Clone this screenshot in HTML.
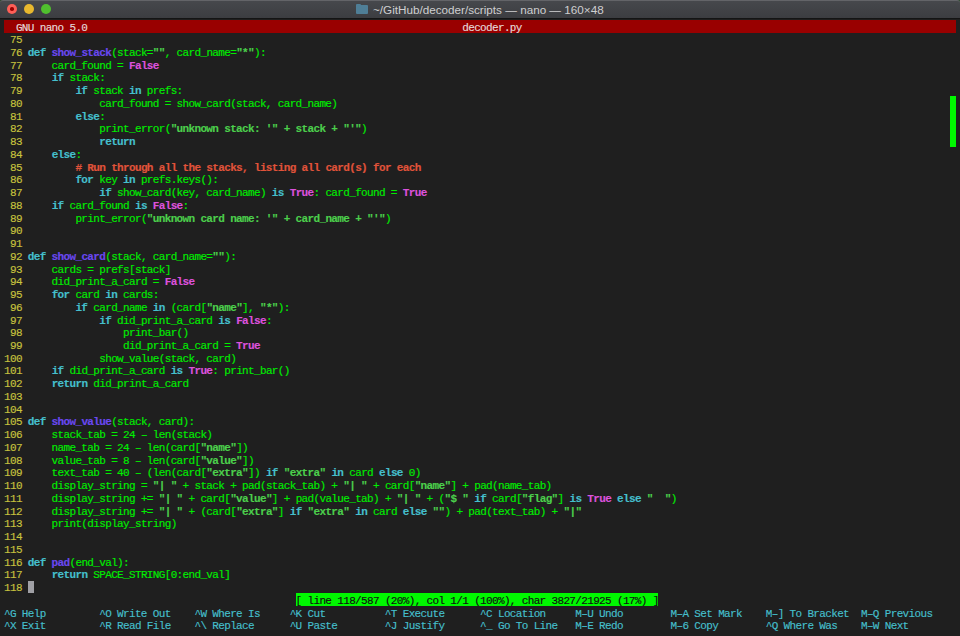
<!DOCTYPE html>
<html><head><meta charset="utf-8"><style>
html,body{margin:0;padding:0}
body{width:960px;height:636px;overflow:hidden;background:#1f1f1f;position:relative}
.bg0{position:absolute;left:0;top:0;width:960px;height:10px;background:#2f4a30}
.win{position:absolute;left:0;top:0;width:960px;height:18px;background:linear-gradient(#46484c,#3c3d41);border-top:1px solid #636468;box-sizing:border-box;border-radius:3px 3px 0 0}
.winb{position:absolute;left:0;top:18px;width:960px;height:1px;background:#141414}
.dot{position:absolute;top:3.9px;width:10.6px;height:10.6px;border-radius:50%}
.title{position:absolute;top:2.6px;left:373px;font:11.7px/14px "Liberation Sans",sans-serif;color:#cfcfd0;white-space:pre}
.folder{position:absolute;left:356px;top:5px;width:12px;height:9px;background:#4f7e96;border-radius:1px}
.folder:before{content:"";position:absolute;left:0;top:-1.5px;width:5px;height:2px;background:#4f7e96;border-radius:1px 1px 0 0}
.r{position:absolute;left:4px;height:12.74px;white-space:pre;font:11px/12.74px "Liberation Mono",monospace;letter-spacing:-0.65px;padding-top:1.5px;box-sizing:border-box;color:#00ee00;-webkit-text-stroke:0.15px}
.r b,.r i{font-style:normal;font-weight:normal}
.tb{position:absolute;left:4px;width:952px;height:12.9px;background:#990000}
.tt{color:#e6d8d8}
.ln{color:#c8c33e}
.kw{color:#45bfcc;font-weight:bold!important}
.fn{color:#6a48f0;font-weight:bold!important}
.sp{color:#dc52dc;font-weight:bold!important}
.st{color:#4ccf4c;font-weight:bold!important}
.cm{color:#e0533a;font-weight:bold!important}
.cur{position:absolute;left:28px;width:6px;height:12.74px;background:#a0a0a5}
.ind{position:absolute;left:949.7px;width:6.3px;background:#00f800}
.st0{position:absolute;left:295.55px;width:362.95px;height:12.74px;background:#00f800}
.stt{color:#101010}
.sc{color:#45bfcc}
</style></head><body>
<div class=bg0></div><div class=win></div><div class=winb></div>
<div class=dot style="left:6.7px;background:#fe5f57"><i style="position:absolute;left:3.5px;top:3.5px;width:3.6px;height:3.6px;border-radius:50%;background:#9a0000"></i></div>
<div class=dot style="left:23.6px;background:#e8b82e"></div>
<div class=dot style="left:40.6px;background:#50c02e"></div>
<div class=folder></div>
<div class=title>~/GitHub/decoder/scripts — nano — 160×48</div>
<div class=tb style="top:20.00px"></div>
<div class=r style="top:20.00px"><i class=tt>  GNU nano 5.0                                                               decoder.py</i></div>
<div class=r style="top:32.74px"><i class=ln> 75 </i></div>
<div class=r style="top:45.48px"><i class=ln> 76 </i><b class=kw>def</b><b class=fn> show_stack</b>(stack=<b class=st>&quot;&quot;</b>, card_name=<b class=st>&quot;*&quot;</b>):</div>
<div class=r style="top:58.22px"><i class=ln> 77 </i>    card_found = <b class=sp>False</b></div>
<div class=r style="top:70.96px"><i class=ln> 78 </i>    <b class=kw>if</b> stack:</div>
<div class=r style="top:83.70px"><i class=ln> 79 </i>        <b class=kw>if</b> stack <b class=kw>in</b> prefs:</div>
<div class=r style="top:96.44px"><i class=ln> 80 </i>            card_found = show_card(stack, card_name)</div>
<div class=r style="top:109.18px"><i class=ln> 81 </i>        <b class=kw>else</b>:</div>
<div class=r style="top:121.92px"><i class=ln> 82 </i>            print_error(<b class=st>&quot;unknown stack: &#x27;&quot; + stack + &quot;&#x27;&quot;</b>)</div>
<div class=r style="top:134.66px"><i class=ln> 83 </i>            <b class=kw>return</b></div>
<div class=r style="top:147.40px"><i class=ln> 84 </i>    <b class=kw>else</b>:</div>
<div class=r style="top:160.14px"><i class=ln> 85 </i>       <b class=cm> # Run through all the stacks, listing all card(s) for each</b></div>
<div class=r style="top:172.88px"><i class=ln> 86 </i>        <b class=kw>for</b> key <b class=kw>in</b> prefs.keys():</div>
<div class=r style="top:185.62px"><i class=ln> 87 </i>            <b class=kw>if</b> show_card(key, card_name) <b class=kw>is</b> <b class=sp>True</b>: card_found = <b class=sp>True</b></div>
<div class=r style="top:198.36px"><i class=ln> 88 </i>    <b class=kw>if</b> card_found <b class=kw>is</b> <b class=sp>False</b>:</div>
<div class=r style="top:211.10px"><i class=ln> 89 </i>        print_error(<b class=st>&quot;unknown card name: &#x27;&quot; + card_name + &quot;&#x27;&quot;</b>)</div>
<div class=r style="top:223.84px"><i class=ln> 90 </i></div>
<div class=r style="top:236.58px"><i class=ln> 91 </i></div>
<div class=r style="top:249.32px"><i class=ln> 92 </i><b class=kw>def</b><b class=fn> show_card</b>(stack, card_name=<b class=st>&quot;&quot;</b>):</div>
<div class=r style="top:262.06px"><i class=ln> 93 </i>    cards = prefs[stack]</div>
<div class=r style="top:274.80px"><i class=ln> 94 </i>    did_print_a_card = <b class=sp>False</b></div>
<div class=r style="top:287.54px"><i class=ln> 95 </i>    <b class=kw>for</b> card <b class=kw>in</b> cards:</div>
<div class=r style="top:300.28px"><i class=ln> 96 </i>        <b class=kw>if</b> card_name <b class=kw>in</b> (card[<b class=st>&quot;name&quot;</b>], <b class=st>&quot;*&quot;</b>):</div>
<div class=r style="top:313.02px"><i class=ln> 97 </i>            <b class=kw>if</b> did_print_a_card <b class=kw>is</b> <b class=sp>False</b>:</div>
<div class=r style="top:325.76px"><i class=ln> 98 </i>                print_bar()</div>
<div class=r style="top:338.50px"><i class=ln> 99 </i>                did_print_a_card = <b class=sp>True</b></div>
<div class=r style="top:351.24px"><i class=ln>100 </i>            show_value(stack, card)</div>
<div class=r style="top:363.98px"><i class=ln>101 </i>    <b class=kw>if</b> did_print_a_card <b class=kw>is</b> <b class=sp>True</b>: print_bar()</div>
<div class=r style="top:376.72px"><i class=ln>102 </i>    <b class=kw>return</b> did_print_a_card</div>
<div class=r style="top:389.46px"><i class=ln>103 </i></div>
<div class=r style="top:402.20px"><i class=ln>104 </i></div>
<div class=r style="top:414.94px"><i class=ln>105 </i><b class=kw>def</b><b class=fn> show_value</b>(stack, card):</div>
<div class=r style="top:427.68px"><i class=ln>106 </i>    stack_tab = 24 – len(stack)</div>
<div class=r style="top:440.42px"><i class=ln>107 </i>    name_tab = 24 – len(card[<b class=st>&quot;name&quot;</b>])</div>
<div class=r style="top:453.16px"><i class=ln>108 </i>    value_tab = 8 – len(card[<b class=st>&quot;value&quot;</b>])</div>
<div class=r style="top:465.90px"><i class=ln>109 </i>    text_tab = 40 – (len(card[<b class=st>&quot;extra&quot;</b>]) <b class=kw>if</b> <b class=st>&quot;extra&quot;</b> <b class=kw>in</b> card <b class=kw>else</b> 0)</div>
<div class=r style="top:478.64px"><i class=ln>110 </i>    display_string = <b class=st>&quot;| &quot;</b> + stack + pad(stack_tab) + <b class=st>&quot;| &quot;</b> + card[<b class=st>&quot;name&quot;</b>] + pad(name_tab)</div>
<div class=r style="top:491.38px"><i class=ln>111 </i>    display_string += <b class=st>&quot;| &quot;</b> + card[<b class=st>&quot;value&quot;</b>] + pad(value_tab) + <b class=st>&quot;| &quot;</b> + (<b class=st>&quot;$ &quot;</b> <b class=kw>if</b> card[<b class=st>&quot;flag&quot;</b>] <b class=kw>is</b> <b class=sp>True</b> <b class=kw>else</b> <b class=st>&quot;  &quot;</b>)</div>
<div class=r style="top:504.12px"><i class=ln>112 </i>    display_string += <b class=st>&quot;| &quot;</b> + (card[<b class=st>&quot;extra&quot;</b>] <b class=kw>if</b> <b class=st>&quot;extra&quot;</b> <b class=kw>in</b> card <b class=kw>else</b> <b class=st>&quot;&quot;</b>) + pad(text_tab) + <b class=st>&quot;|&quot;</b></div>
<div class=r style="top:516.86px"><i class=ln>113 </i>    print(display_string)</div>
<div class=r style="top:529.60px"><i class=ln>114 </i></div>
<div class=r style="top:542.34px"><i class=ln>115 </i></div>
<div class=r style="top:555.08px"><i class=ln>116 </i><b class=kw>def</b><b class=fn> pad</b>(end_val):</div>
<div class=r style="top:567.82px"><i class=ln>117 </i>    <b class=kw>return</b> SPACE_STRING[0:end_val]</div>
<div class=r style="top:580.56px"><i class=ln>118 </i></div>
<div class=cur style="top:580.56px"></div>
<div class=ind style="top:96.44px;height:50.96px"></div>
<div class=st0 style="top:593.30px"></div>
<div class=r style="top:593.30px">                                                 <i class=stt>[ line 118/587 (20%), col 1/1 (100%), char 3827/21925 (17%) ]</i></div>
<div class=r style="top:606.04px"><i class=sc>^G Help         ^O Write Out    ^W Where Is     ^K Cut          ^T Execute      ^C Location     M–U Undo        M–A Set Mark    M–] To Bracket  M–Q Previous</i></div>
<div class=r style="top:618.78px"><i class=sc>^X Exit         ^R Read File    ^\ Replace      ^U Paste        ^J Justify      ^_ Go To Line   M–E Redo        M–6 Copy        ^Q Where Was    M–W Next</i></div>
</body></html>
